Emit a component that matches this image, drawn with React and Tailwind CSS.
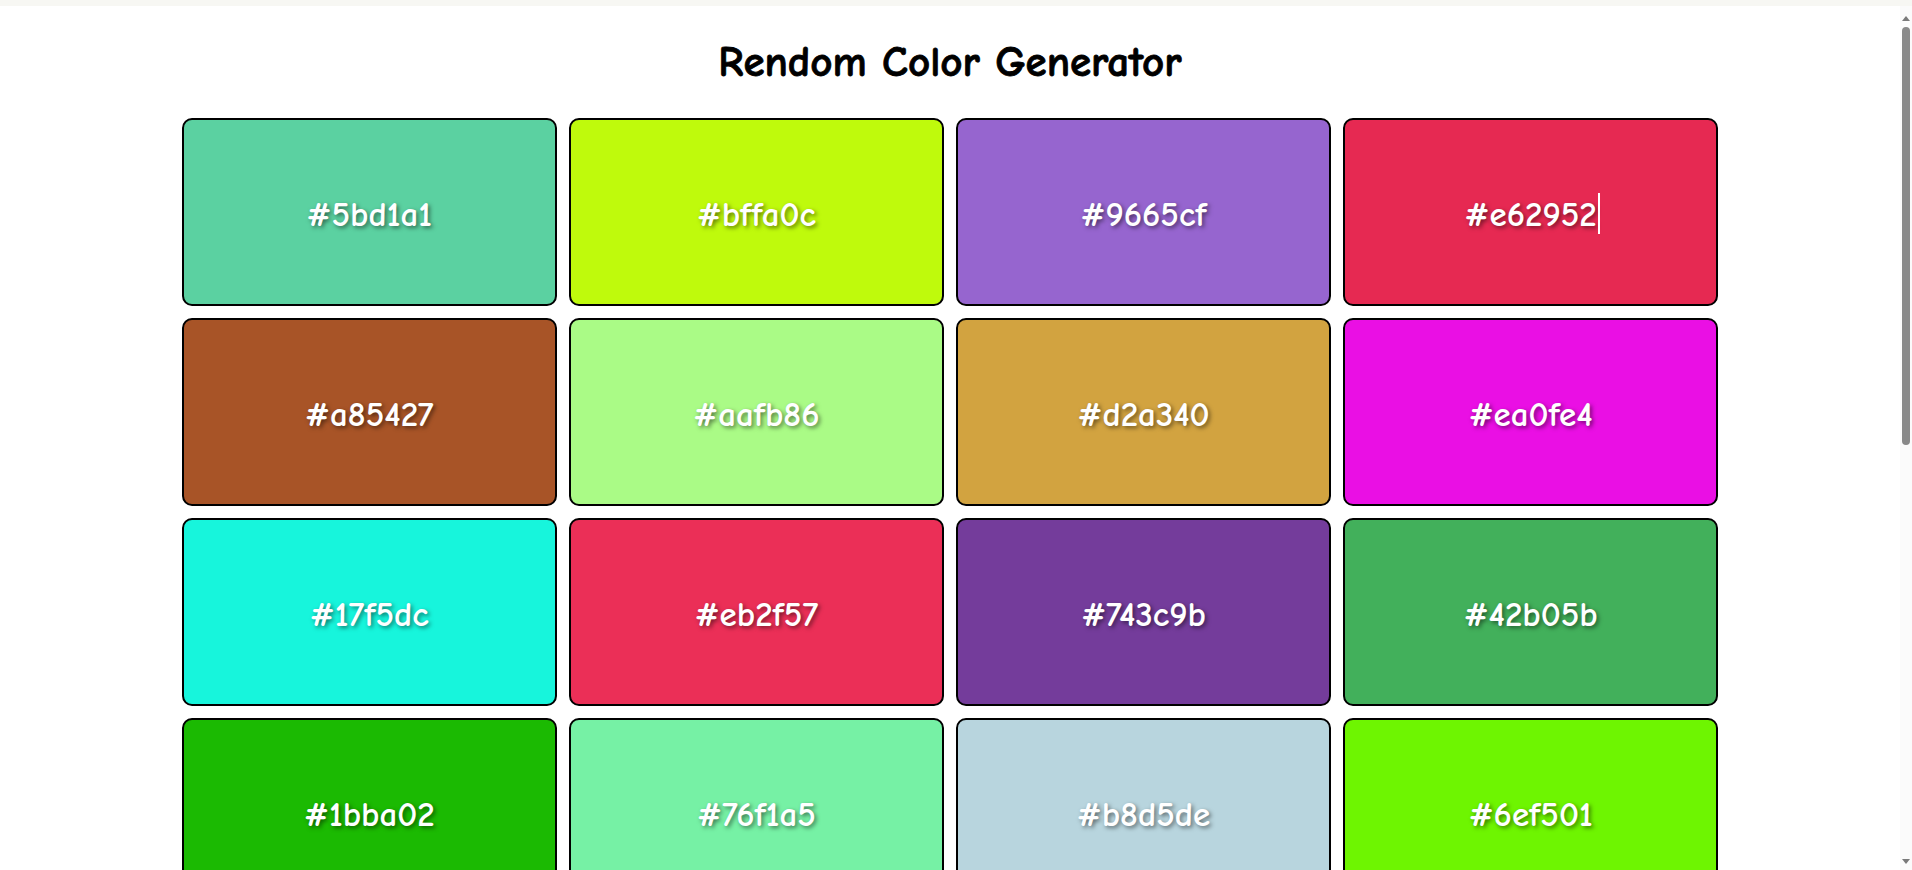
import React from "react";

const colors = [
  "#5bd1a1", "#bffa0c", "#9665cf", "#e62952",
  "#a85427", "#aafb86", "#d2a340", "#ea0fe4",
  "#17f5dc", "#eb2f57", "#743c9b", "#42b05b",
  "#1bba02", "#76f1a5", "#b8d5de", "#6ef501",
  "#3a7bd5", "#f2994a", "#27ae60", "#c0392b",
];

export default function App() {
  return (
    <div className="flex h-screen flex-col overflow-hidden bg-white [font-family:'Comic_Sans_MS','Comic_Neue','DejaVu_Sans',sans-serif]">
      <div className="h-[6px] shrink-0 bg-[#f7f7f3]" />
      <div className="flex min-h-0 flex-1">
        <main className="min-w-0 flex-1 overflow-hidden">
          <h1 className="pt-[31px] pb-[31px] text-center text-[43px] font-bold leading-[50px] text-black [-webkit-text-stroke:0.8px_black]">
            Rendom Color Generator
          </h1>
          <div className="mx-auto grid w-[1536px] grid-cols-4 gap-x-[12.5px] gap-y-[12px] pb-[40px]">
            {colors.map((c, i) => (
              <div
                key={c + i}
                className="flex h-[188px] items-center justify-center rounded-[10px] border-2 border-black"
                style={{ backgroundColor: c }}
              >
                <span className="relative mt-[5px] text-[35px] font-bold leading-[44px] text-white [text-shadow:2px_2px_4px_rgba(0,0,0,0.5)]">
                  {c}
                  {i === 3 && (
                    <span className="absolute right-[-3px] top-[0px] h-[41px] w-[2px] bg-white" />
                  )}
                </span>
              </div>
            ))}
          </div>
        </main>
        <aside className="flex w-[12px] shrink-0 flex-col items-center bg-[#fbfbfb]">
          <svg width="8" height="8" viewBox="0 0 8 8" className="mt-[8px]">
            <polygon points="0,7 4,2 8,7" fill="#7a7a7a" />
          </svg>
          <div className="mt-[5px] h-[418px] w-[8px] rounded-[4px] bg-[#898989]" />
          <div className="flex-1" />
          <svg width="8" height="8" viewBox="0 0 8 8" className="mb-[4px]">
            <polygon points="0,1 8,1 4,6" fill="#7a7a7a" />
          </svg>
        </aside>
      </div>
    </div>
  );
}
